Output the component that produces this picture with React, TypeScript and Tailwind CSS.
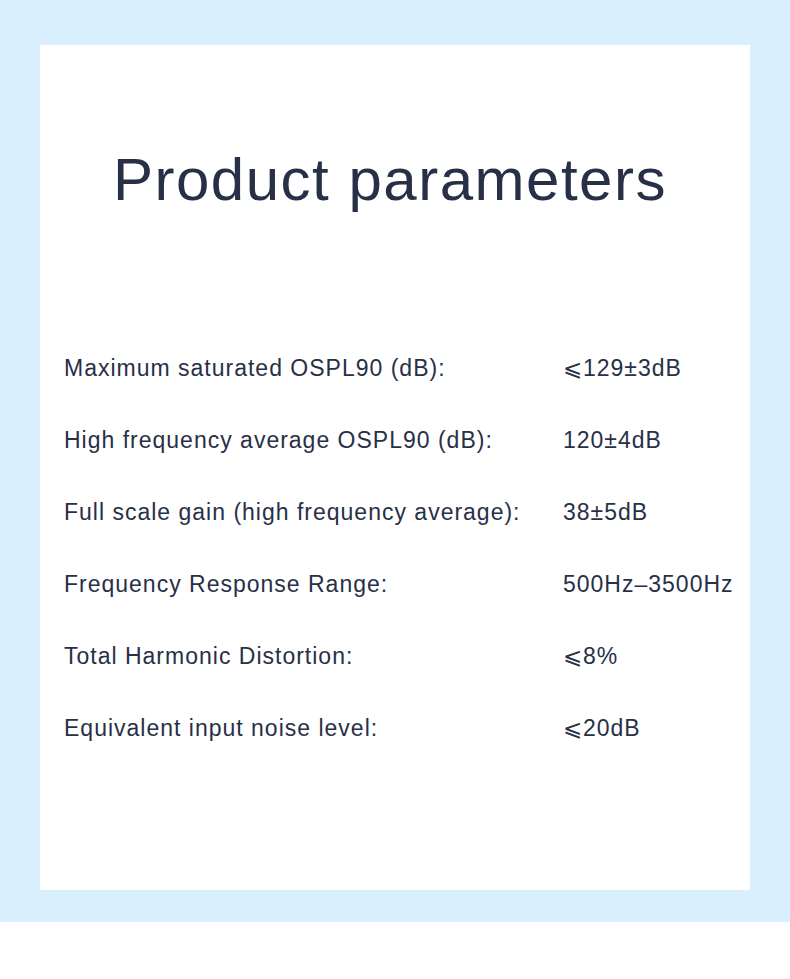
const params: [string, string][] = [
  ["Maximum saturated OSPL90 (dB):", "⩽129±3dB"],
  ["High frequency average OSPL90 (dB):", "120±4dB"],
  ["Full scale gain (high frequency average):", "38±5dB"],
  ["Frequency Response Range:", "500Hz–3500Hz"],
  ["Total Harmonic Distortion:", "⩽8%"],
  ["Equivalent input noise level:", "⩽20dB"],
];

export default function App() {
  return (
    <div className="w-[790px] h-[979px] bg-white text-[#283047] font-['Liberation_Sans',Arial,sans-serif]">
      <div className="h-[922px] bg-[#d9effe] pt-[45px] px-[40px]">
        <div className="h-[845px] bg-white">
          <h1 className="pt-[97px] pl-[73px] text-[60px] leading-[76px] font-normal tracking-[1.5px]">
            Product parameters
          </h1>
          <div className="mt-[114px] pl-[24px]">
            {params.map(([label, value]) => (
              <div key={label} className="flex h-[72px] items-center text-[23px] tracking-[1px]">
                <span className="w-[499px]">{label}</span>
                <span>{value}</span>
              </div>
            ))}
          </div>
        </div>
      </div>
    </div>
  );
}
